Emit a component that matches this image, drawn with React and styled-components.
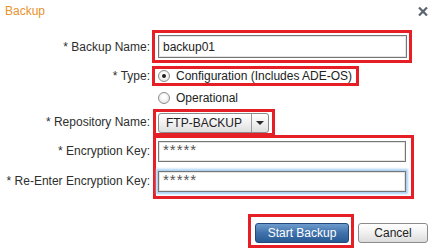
import React from "react";
import styled, { createGlobalStyle, css } from "styled-components";

const Global = createGlobalStyle`
  html, body { margin: 0; padding: 0; background: #fff; }
  body { font-family: "Liberation Sans", Arial, sans-serif; font-size: 12px; color: #333; }
`;

const Dialog = styled.div`
  width: 443px;
  height: 250px;
  box-sizing: border-box;
  background: #fff;
  display: flex;
  flex-direction: column;
`;

const Header = styled.div`
  height: 22px;
  display: flex;
  align-items: center;
  justify-content: space-between;
  padding: 0 15px 0 5px;
`;

const Title = styled.div`
  color: #e8922c;
  font-size: 12px;
  line-height: 14px;
`;

const Close = styled.svg`
  width: 10px;
  height: 9px;
  display: block;
`;

const Form = styled.div`
  margin-top: 8px;
  display: flex;
  flex-direction: column;
`;

const Row = styled.div`
  display: flex;
  align-items: center;
  height: ${(p) => p.$h}px;
  margin-top: ${(p) => p.$mt || 0}px;
`;

const Label = styled.div`
  width: 150px;
  padding-right: 2px;
  text-align: right;
  white-space: nowrap;
  color: #2e2e2e;
`;

const LabelStack = styled.div`
  display: flex;
  flex-direction: column;
  align-self: stretch;
  padding-top: 6px;
  gap: 9px;
`;

const StackLabel = styled(Label)`
  height: 21px;
  line-height: 21px;
`;

const Annot = styled.div`
  border: 3px solid #e61e26;
  box-sizing: border-box;
  margin-left: ${(p) => p.$ml || 0}px;
  padding: ${(p) => p.$pad};
  display: flex;
  flex-direction: ${(p) => (p.$col ? "column" : "row")};
  gap: ${(p) => p.$gap || 0}px;
  align-items: ${(p) => (p.$col ? "flex-start" : "center")};
`;

const TextInput = styled.input`
  box-sizing: border-box;
  width: ${(p) => p.$w}px;
  height: ${(p) => p.$h}px;
  margin: 0;
  border: 1px solid #767676;
  box-shadow: inset 0 0 0 1px #e4e4e4;
  padding: 0 4px;
  font-family: "Liberation Sans", Arial, sans-serif;
  font-size: 12px;
  color: #222;
  background: #fff;
  outline: none;
  ${(p) =>
    p.$mask &&
    css`
      font-size: 15px;
      letter-spacing: 1px;
      padding-bottom: 5px;
      color: #555;
    `}
  ${(p) =>
    p.$focus &&
    css`
      box-shadow: inset 0 0 0 1px #e4e4e4, 0 0 2px 2px #a9d0f3;
    `}
`;

const RadioItem = styled.label`
  display: flex;
  align-items: center;
  gap: 6px;
  color: #222;
  white-space: nowrap;
  padding-left: ${(p) => p.$pl || 0}px;
`;

const RadioCircle = styled.span`
  width: 12px;
  height: 12px;
  box-sizing: border-box;
  border-radius: 50%;
  border: 1px solid #8c8c8c;
  background: radial-gradient(circle at 50% 40%, #ffffff 20%, #dcdcdc 100%);
  display: flex;
  align-items: center;
  justify-content: center;
  &::after {
    content: "";
    width: 4px;
    height: 4px;
    border-radius: 50%;
    background: ${(p) => (p.$on ? "#1e1e1e" : "transparent")};
  }
`;

const Select = styled.div`
  width: 111px;
  height: 20px;
  box-sizing: border-box;
  border: 1px solid #8a8a8a;
  border-radius: 3px;
  background: linear-gradient(#ffffff, #f1f1f1 50%, #dedede);
  display: flex;
  align-items: stretch;
  color: #222;
`;

const SelectText = styled.div`
  flex: 1;
  padding-left: 7px;
  display: flex;
  align-items: center;
`;

const SelectArrow = styled.div`
  width: 16px;
  border-left: 1px solid #9a9a9a;
  display: flex;
  align-items: center;
  justify-content: center;
  &::after {
    content: "";
    border-left: 4px solid transparent;
    border-right: 4px solid transparent;
    border-top: 4px solid #2a2a2a;
  }
`;

const Buttons = styled.div`
  margin-top: 15px;
  display: flex;
  justify-content: flex-end;
  align-items: flex-start;
  padding-right: 15px;
  gap: 4px;
`;

const Button = styled.button`
  box-sizing: border-box;
  height: 20px;
  width: ${(p) => p.$w}px;
  margin: 0;
  padding: 0;
  border-radius: 3px;
  font-family: "Liberation Sans", Arial, sans-serif;
  font-size: 12px;
  ${(p) =>
    p.$primary
      ? css`
          color: #fff;
          border: 1px solid #23497a;
          background: linear-gradient(#6d9bcd, #3f71aa 50%, #285a93);
        `
      : css`
          color: #222;
          border: 1px solid #8b8b8b;
          background: linear-gradient(#ffffff, #f0f0f0 50%, #dcdcdc);
          margin-top: 9px;
        `}
`;

export default function App() {
  return (
    <>
      <Global />
      <Dialog>
        <Header>
          <Title>Backup</Title>
          <Close viewBox="0 0 10 9">
            <path d="M1 0.5 L9 8.5 M9 0.5 L1 8.5" stroke="#5c6670" strokeWidth="2.2" />
          </Close>
        </Header>
        <Form>
          <Row $h={33}>
            <Label>* Backup Name:</Label>
            <Annot $pad="2px 2px 2px 3px">
              <TextInput $w={249} $h={23} defaultValue="backup01" />
            </Annot>
          </Row>
          <Row $h={21} $mt={2}>
            <Label>* Type:</Label>
            <Annot $pad="0 4px 0 3px">
              <RadioItem>
                <RadioCircle $on />
                Configuration (Includes ADE-OS)
              </RadioItem>
            </Annot>
          </Row>
          <Row $h={23}>
            <Label />
            <RadioItem $pl={6}>
              <RadioCircle />
              Operational
            </RadioItem>
          </Row>
          <Row $h={26}>
            <Label>* Repository Name:</Label>
            <Annot $ml={1} $pad="1px 3px 0 2px">
              <Select>
                <SelectText>FTP-BACKUP</SelectText>
                <SelectArrow />
              </Select>
            </Annot>
          </Row>
          <Row $h={64}>
            <LabelStack>
              <StackLabel>* Encryption Key:</StackLabel>
              <StackLabel>* Re-Enter Encryption Key:</StackLabel>
            </LabelStack>
            <Annot $ml={1} $col $gap={9} $pad="3px 5px 4px 2px">
              <TextInput $w={248} $h={21} $mask defaultValue="*****" />
              <TextInput $w={248} $h={21} $mask $focus defaultValue="*****" />
            </Annot>
          </Row>
        </Form>
        <Buttons>
          <Annot $pad="6px 2px 2px 4px">
            <Button $primary $w={94}>Start Backup</Button>
          </Annot>
          <Button $w={70}>Cancel</Button>
        </Buttons>
      </Dialog>
    </>
  );
}
